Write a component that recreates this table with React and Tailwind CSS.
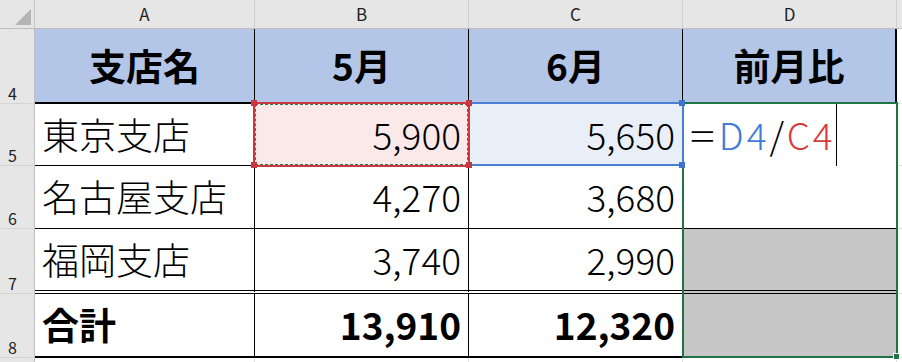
const font = { fontFamily: '"Noto Sans CJK JP", "Noto Sans", sans-serif' };

const columns = [
  { key: 'A', width: 'w-[220px]' },
  { key: 'B', width: 'w-[214px]' },
  { key: 'C', width: 'w-[214px]' },
  { key: 'D', width: 'w-[214px]' },
];

const rows = [
  { no: 5, name: '東京支店', may: '5,900', june: '5,650', h: 'h-[62px]', line: 'border-b border-black' },
  { no: 6, name: '名古屋支店', may: '4,270', june: '3,680', h: 'h-[63px]', line: 'border-b border-black' },
  { no: 7, name: '福岡支店', may: '3,740', june: '2,990', h: 'h-[65px]', line: 'border-b-4 border-double border-black' },
];

function RowHead({ no, h }) {
  return (
    <div
      className={`w-[35px] shrink-0 ${h} bg-[#e6e6e6] border-r border-b border-r-[#bfbfbf] border-b-[#d4d4d4] flex items-end pl-[8px] pb-[2px] text-[16px] leading-none text-[#222]`}
    >
      {no}
    </div>
  );
}

function Cursor() {
  return <span className="self-stretch w-px bg-black" />;
}

export default function App() {
  return (
    <div className="relative w-[902px] h-[362px] overflow-hidden bg-white" style={font}>
      {/* column letters */}
      <div className="flex h-[29px]">
        <div className="w-[35px] shrink-0 bg-[#e6e6e6] border-r border-b border-r-[#c8c8c8] border-b-[#bdbdbd] flex items-end justify-end pr-[3px] pb-[3px]">
          <svg width="16" height="16" viewBox="0 0 16 16">
            <polygon points="16,0 16,16 0,16" fill="#b4b4b4" />
          </svg>
        </div>
        {columns.map((c) => (
          <div
            key={c.key}
            className={`${c.width} shrink-0 bg-[#e6e6e6] border-r border-b border-r-[#d0d0d0] border-b-[#bdbdbd] flex items-center justify-center text-[17px] text-[#222]`}
          >
            {c.key}
          </div>
        ))}
        <div className="flex-1 bg-[#e6e6e6] border-b border-b-[#bdbdbd]" />
      </div>

      {/* row 4 : heading */}
      <div className="flex h-[75px]">
        <RowHead no={4} h="h-[75px]" />
        <div className="w-[220px] shrink-0 bg-[#b4c6e7] border-r border-b-2 border-black flex items-center justify-center text-[37px] font-bold text-black">
          支店名
        </div>
        <div className="w-[214px] shrink-0 bg-[#b4c6e7] border-r border-b-2 border-black flex items-center justify-center text-[37px] font-bold text-black">
          5月
        </div>
        <div className="w-[214px] shrink-0 bg-[#b4c6e7] border-r border-b-2 border-black flex items-center justify-center text-[37px] font-bold text-black">
          6月
        </div>
        <div className="w-[214px] shrink-0 bg-[#b4c6e7] border-r-2 border-b-2 border-black flex items-center justify-center text-[37px] font-bold text-black">
          前月比
        </div>
        <div className="flex-1 border-b border-[#e0e0e0]" />
      </div>

      {/* rows 5-7 */}
      {rows.map((r) => (
        <div key={r.no} className="flex">
          <RowHead no={r.no} h={r.h} />
          <div className={`w-[220px] shrink-0 ${r.h} border-r border-black ${r.line} flex items-center pl-[7px] text-[37px] font-light text-black`}>
            {r.name}
          </div>
          <div
            className={`w-[214px] shrink-0 ${r.h} border-r border-black ${r.line} flex items-center justify-end pr-[7px] text-[37px] font-light text-black ${r.no === 5 ? 'bg-[#fbe8e8]' : ''}`}
          >
            {r.may}
          </div>
          <div
            className={`w-[214px] shrink-0 ${r.h} border-r border-black ${r.line} flex items-center justify-end pr-[7px] text-[37px] font-light text-black ${r.no === 5 ? 'bg-[#e9eff9]' : ''}`}
          >
            {r.june}
          </div>
          <div
            className={`w-[214px] shrink-0 ${r.h} ${r.no === 5 ? '' : r.line} ${r.no === 7 ? 'bg-[#c6c6c6]' : ''} flex items-stretch pl-[7px] text-[37px] font-light`}
          >
            {r.no === 5 && (
              <>
                <span className="self-center tracking-[3px]">
                  <span className="inline-block origin-left scale-x-[1.25] mr-[6px]">=</span>
                  <span className="text-[#3f7ad6]">D4</span>/<span className="text-[#d43c3c]">C4</span>
                </span>
                <Cursor />
              </>
            )}
          </div>
          <div className={`flex-1 ${r.h} border-b border-[#e0e0e0]`} />
        </div>
      ))}

      {/* row 8 : total */}
      <div className="flex">
        <RowHead no={8} h="h-[64px]" />
        <div className="w-[220px] shrink-0 h-[64px] border-r border-b-2 border-black flex items-center pl-[7px] text-[37px] font-bold text-black">
          合計
        </div>
        <div className="w-[214px] shrink-0 h-[64px] border-r border-b-2 border-black flex items-center justify-end pr-[7px] text-[37px] font-bold text-black">
          13,910
        </div>
        <div className="w-[214px] shrink-0 h-[64px] border-r border-b-2 border-black flex items-center justify-end pr-[7px] text-[37px] font-bold text-black">
          12,320
        </div>
        <div className="w-[214px] shrink-0 h-[64px] border-b-2 border-black bg-[#c6c6c6]" />
        <div className="flex-1 h-[64px] border-b border-[#e0e0e0]" />
      </div>

      {/* row 9 (partial) */}
      <div className="flex h-[10px]">
        <div className="w-[35px] shrink-0 bg-[#e6e6e6] border-r border-r-[#bfbfbf]" />
        <div className="w-[220px] shrink-0 border-r border-[#e0e0e0]" />
        <div className="w-[214px] shrink-0 border-r border-[#e0e0e0]" />
        <div className="w-[214px] shrink-0 border-r border-[#e0e0e0]" />
        <div className="w-[214px] shrink-0 border-r border-[#e0e0e0]" />
      </div>

      {/* selection D5:D8 */}
      <div className="absolute left-[682px] top-[102px] w-[216px] h-[256px] border-2 border-[#217346] pointer-events-none" />
      <div className="absolute left-[893px] top-[353px] w-[7px] h-[7px] bg-[#217346] border border-white" />

      {/* reference C5 (blue) */}
      <div className="absolute left-[468px] top-[102px] w-[216px] h-[64px] border-2 border-[#4a7fd4] pointer-events-none" />
      <div className="absolute left-[679px] top-[100px] w-[6px] h-[6px] bg-[#3f74cc]" />
      <div className="absolute left-[679px] top-[162px] w-[6px] h-[6px] bg-[#3f74cc]" />

      {/* reference B5 (red, copy marquee) */}
      <div className="absolute left-[253px] top-[102px] w-[217px] h-[65px] border-2 border-[#c9373f] pointer-events-none">
        <div className="absolute inset-0 border border-dashed border-[#2e7d4f]" />
      </div>
      <div className="absolute left-[251px] top-[100px] w-[6px] h-[6px] bg-[#c9373f]" />
      <div className="absolute left-[466px] top-[100px] w-[6px] h-[6px] bg-[#c9373f]" />
      <div className="absolute left-[251px] top-[162px] w-[6px] h-[6px] bg-[#c9373f]" />
      <div className="absolute left-[466px] top-[162px] w-[6px] h-[6px] bg-[#c9373f]" />
    </div>
  );
}
